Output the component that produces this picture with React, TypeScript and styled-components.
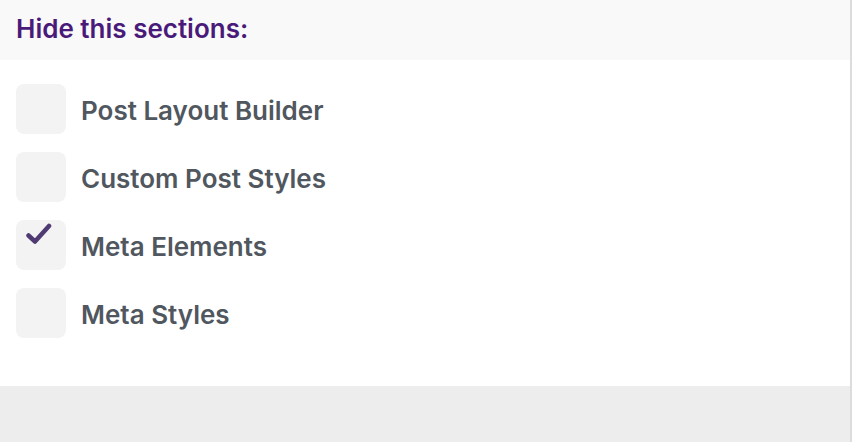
import React, { useState } from "react";
import styled, { createGlobalStyle } from "styled-components";

const GlobalStyle = createGlobalStyle`
  html, body {
    margin: 0;
    padding: 0;
    background: #ffffff;
  }
  body {
    font-family: Inter, "Noto Sans", sans-serif;
  }
`;

const Page = styled.div`
  width: 854px;
  height: 442px;
  display: flex;
  background: #ffffff;
`;

const Panel = styled.div`
  width: 850px;
  border-right: 2px solid #dcdcdc;
  display: flex;
  flex-direction: column;
`;

const Header = styled.div`
  height: 60px;
  box-sizing: border-box;
  background: #f9f9f9;
  display: flex;
  align-items: center;
  padding: 0 16px 3px;
`;

const Title = styled.h3`
  margin: 0;
  font-size: 26px;
  font-weight: 600;
  color: #4a1a7a;
  line-height: 1;
`;

const List = styled.div`
  height: 326px;
  box-sizing: border-box;
  padding: 24px 16px 0;
  display: flex;
  flex-direction: column;
  gap: 18px;
`;

const Row = styled.label`
  display: flex;
  align-items: center;
  gap: 15px;
  cursor: pointer;
`;

const Box = styled.span`
  position: relative;
  width: 50px;
  height: 50px;
  border-radius: 8px;
  background: #f3f3f3;
  flex-shrink: 0;
`;

const Check = styled.svg`
  position: absolute;
  left: 10px;
  top: 2px;
  width: 26px;
  height: 26px;
`;

const Label = styled.span`
  font-size: 26px;
  font-weight: 600;
  color: #50575e;
  line-height: 1;
  padding-top: 3px;
`;

const Footer = styled.div`
  flex: 1;
  background: #ededed;
`;

const items = [
  "Post Layout Builder",
  "Custom Post Styles",
  "Meta Elements",
  "Meta Styles",
];

export default function App() {
  const [checked, setChecked] = useState<Record<string, boolean>>({
    "Meta Elements": true,
  });

  return (
    <>
      <GlobalStyle />
      <Page>
        <Panel>
          <Header>
            <Title>Hide this sections:</Title>
          </Header>
          <List>
            {items.map((item) => (
              <Row
                key={item}
                onClick={() => setChecked((c) => ({ ...c, [item]: !c[item] }))}
              >
                <Box>
                  {checked[item] && (
                    <Check viewBox="0 0 26 26">
                      <path
                        d="M2.5 13.5 L9 19.5 L23 4"
                        fill="none"
                        stroke="#4f3a73"
                        strokeWidth="4.5"
                        strokeLinecap="round"
                        strokeLinejoin="round"
                      />
                    </Check>
                  )}
                </Box>
                <Label>{item}</Label>
              </Row>
            ))}
          </List>
          <Footer />
        </Panel>
      </Page>
    </>
  );
}
